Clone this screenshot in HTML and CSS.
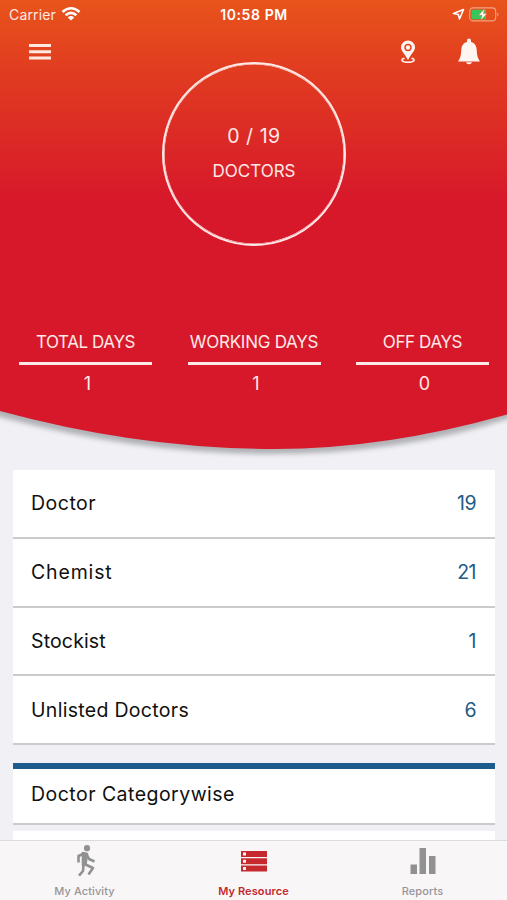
FILE: index.html
```html
<!DOCTYPE html>
<html lang="en">
<head>
<meta charset="utf-8">
<title>My Resource</title>
<link rel="stylesheet" href="styles.css">
</head>
<body>
<div class="app">
  <header class="hero">
    <svg class="hero-bg" viewBox="0 0 507 470" aria-hidden="true">
      <defs>
        <linearGradient id="sky" x1="0" y1="0" x2="0" y2="1">
          <stop offset="0" stop-color="#e8541b"/>
          <stop offset=".15" stop-color="#e13d20"/>
          <stop offset=".45" stop-color="#d7182b"/>
          <stop offset="1" stop-color="#d7182b"/>
        </linearGradient>
        <filter id="shade" x="-5%" y="-5%" width="110%" height="110%"><feGaussianBlur stdDeviation="2.5"/></filter>
      </defs>
      <path d="M-20 0H527V413L507 419Q400 454 270 454Q140 454 0 417L-20 412Z" fill="#85878a" opacity=".6" filter="url(#shade)"/>
      <path d="M0 0H507V414.500Q385 449 275 449Q140 449 0 411Z" fill="url(#sky)"/>
    </svg>
    <div class="status">
      <div class="carrier"><span class="carrier-name">Carrier</span>
        <svg width="20" height="16" viewBox="0 0 20 16" fill="none" stroke="#fff" stroke-width="2.600"><path d="M1.500 6Q10-1.500 18.500 6M4.600 9.300Q10 4.500 15.400 9.300"/><path d="M10 14.500L6.800 11.400Q10 8.500 13.200 11.400Z" fill="#fff" stroke="none"/></svg>
      </div>
      <span class="time">10:58 PM</span>
      <div class="power">
        <svg width="13" height="13" viewBox="0 0 13 13" fill="none" stroke="#fff" stroke-width="1.600" stroke-linejoin="round"><path d="M1.500 5.500L11.500 1.500L7.500 11L6.300 6.500Z"/></svg>
        <svg width="30" height="15" viewBox="0 0 30 15"><rect x=".7" y=".9" width="26" height="13" rx="3.500" fill="none" stroke="#f3a482" stroke-width="1.100"/><path d="M28.300 5.500Q30.500 7.400 28.300 9.500Z" fill="#f3a482"/><path d="M4 2.700H17V12.200H4Q2.500 12.200 2.500 10.700V4.200Q2.500 2.700 4 2.700Z" fill="#35c85a"/><path d="M15.800 1.500L9.500 8.200H13L11.500 13.500L18 6.600H14.400Z" fill="#fff" stroke="#dc5a22" stroke-width=".5"/></svg>
      </div>
    </div>
    <nav class="toolbar">
      <svg class="menu" width="22" height="16" viewBox="0 0 22 16" fill="#ffe8e1"><path d="M0 0H22V3H0ZM0 6.200H22V9.200H0ZM0 12.400H22V15.400H0Z"/></svg>
      <div class="actions">
        <svg width="16" height="24" viewBox="0 0 16 24"><path fill="#fff5f1" fill-rule="evenodd" d="M8 .5A7 7 0 0 1 15 7.500C15 11 11 14 8 20C5 14 1 11 1 7.500A7 7 0 0 1 8 .5ZM8 3.800A3.700 3.700 0 1 0 8 11.200A3.700 3.700 0 1 0 8 3.800Z"/><circle cx="8" cy="7.500" r="2.200" fill="#fff5f1"/><path d="M4.500 18.200C-.5 19.500 2 22.300 8 22.300S16.500 19.500 11.500 18.200" fill="none" stroke="#fff5f1" stroke-width="1.500"/></svg>
        <svg width="22" height="28" viewBox="0 0 22 28" fill="#fff5f1"><path d="M9 2.500A2 2 0 0 1 13 2.500V4C17 5 18.500 8 18.700 12C19 18 20 20.500 22 23.500H0C2 20.500 3 18 3.300 12C3.500 8 5 5 9 4ZM8 24.300H14Q13.500 26.300 11 26.300T8 24.300Z"/></svg>
      </div>
    </nav>
    <div class="dial"><span class="dial-value">0 / 19</span><span class="dial-label">DOCTORS</span></div>
    <div class="stats">
      <div class="stat"><span class="stat-label total">TOTAL DAYS</span><span class="stat-value">1</span></div>
      <div class="stat"><span class="stat-label working">WORKING DAYS</span><span class="stat-value">1</span></div>
      <div class="stat"><span class="stat-label off">OFF DAYS</span><span class="stat-value">0</span></div>
    </div>
  </header>
  <main class="content">
    <div class="row"><span class="doctor">Doctor</span><span class="count">19</span></div>
    <div class="row"><span class="chemist">Chemist</span><span class="count">21</span></div>
    <div class="row"><span>Stockist</span><span class="count">1</span></div>
    <div class="row"><span class="unlisted">Unlisted Doctors</span><span class="count">6</span></div>
    <section class="category"><span>Doctor Categorywise</span></section>
    <div class="next"></div>
  </main>
  <footer class="tabs">
    <div class="tab">
      <svg width="24" height="34" viewBox="0 0 24 34" fill="none" stroke="#929192" stroke-width="2.600" stroke-linejoin="round"><circle cx="14" cy="4.200" r="3.100" fill="#929192" stroke="none"/><path d="M11 9.500L5.500 12V18.500M13.500 10.500L16 15L21.500 17.500M10.500 21L10 27L6 31.700M12.500 20.500L20 24L15.500 30.500"/><path d="M10 9L14 10L12.500 20L10 21Z" fill="#929192"/></svg>
      <span>My Activity</span></div>
    <div class="tab active">
      <svg width="26" height="34" viewBox="0 0 26 34"><path fill="#c5292e" fill-rule="evenodd" d="M0 7H26V13H0ZM2 8.500V11.500H5V8.500ZM0 14.200H26V20.200H0ZM2 15.700V18.700H5V15.700ZM0 21.400H26V27.400H0ZM2 22.900V25.900H5V22.900Z"/></svg>
      <span>My Resource</span></div>
    <div class="tab">
      <svg width="26" height="34" viewBox="0 0 26 34" fill="#929192"><path d="M.5 20.500H7V30H.5ZM9.500 4H16V30H9.500ZM19 12H25.500V30H19Z"/></svg>
      <span>Reports</span></div>
  </footer>
</div>
</body>
</html>
```
FILE: styles.css
```css
* { box-sizing: border-box; }
body { margin: 0; }
svg { display: block; flex: none; }
.app { width: 507px; height: 900px; display: flex; flex-direction: column; overflow: hidden; background: #f0f0f5; font-family: Inter, "Open Sans", sans-serif; }
.hero { height: 470px; flex: none; position: relative; isolation: isolate; color: #ffe9e6; }
.hero-bg { position: absolute; inset: 0; width: 507px; height: 470px; z-index: -1; }
.status { height: 28px; padding: 0 8px 0 9px; display: grid; grid-template-columns: 1fr auto 1fr; align-items: center; font-size: 14px; white-space: nowrap; }
.carrier { display: flex; align-items: center; gap: 5px; }
.carrier-name { letter-spacing: .15px; }
.time { font-weight: 600; color: #fff; letter-spacing: .6px; }
.power { display: flex; align-items: center; justify-content: flex-end; gap: 4px; }
.toolbar { height: 34px; padding: 10px 27px 0 29px; display: flex; justify-content: space-between; }
.menu { margin-top: 6px; }
.actions { display: flex; gap: 42px; align-items: flex-start; }
.actions svg:first-child { margin-top: 2px; }
.dial { width: 184px; height: 184px; margin-left: 162px; border: 2px solid #ffe9e6; box-shadow: inset 0 0 0 .6px #ffe9e6; border-radius: 50%; display: flex; flex-direction: column; align-items: center; padding-top: 59px; }
.dial-value { font-size: 19.500px; line-height: 26px; letter-spacing: .5px; }
.dial-label { font-size: 17px; line-height: 24px; margin-top: 10px; }
.stats { margin-top: 83px; padding: 0 18px 0 19px; display: grid; grid-template-columns: repeat(3, 133px); justify-content: space-between; }
.stat { display: flex; flex-direction: column; align-items: center; white-space: nowrap; }
.stat-label { font-size: 17px; line-height: 26px; }
.total { letter-spacing: -.4px; }
.working { letter-spacing: -.25px; }
.off { letter-spacing: -.4px; }
.stat-value { width: 100%; margin-top: 7px; padding-left: 4px; border-top: 3px solid #ffe9e6; text-align: center; font-size: 18px; line-height: 32px; padding-top: 3px; }
.content { height: 370px; flex: none; overflow: hidden; padding: 0 12px 0 13px; }
.row { height: 68.750px; display: flex; align-items: center; justify-content: space-between; padding: 0 19px 0 18px; background: #fff; border-bottom: 2px solid #cbcbcc; font-size: 19.500px; color: #101010; letter-spacing: .15px; }
.doctor { letter-spacing: .5px; }
.chemist { letter-spacing: .85px; }
.unlisted { letter-spacing: .3px; }
.count { color: #235b85; letter-spacing: -.5px; }
.category { height: 62px; margin-top: 18px; padding: 0 18px 4px; display: flex; align-items: center; background: #fff; border-top: 6px solid #1d5b8c; border-bottom: 2px solid #cbcbcc; font-size: 19.500px; color: #101010; letter-spacing: .47px; }
.next { height: 30px; margin-top: 6px; background: #fff; }
.tabs { height: 60px; flex: none; border-top: 1px solid #dcdbdc; background: #f8f6f7; display: grid; grid-template-columns: repeat(3, 1fr); }
.tab { display: flex; flex-direction: column; align-items: center; padding-top: 3px; font-size: 11px; font-weight: 500; letter-spacing: .1px; color: #979597; }
.tab span { line-height: 16px; margin-top: 5px; }
.active { color: #c5292e; font-weight: 600; }
```
